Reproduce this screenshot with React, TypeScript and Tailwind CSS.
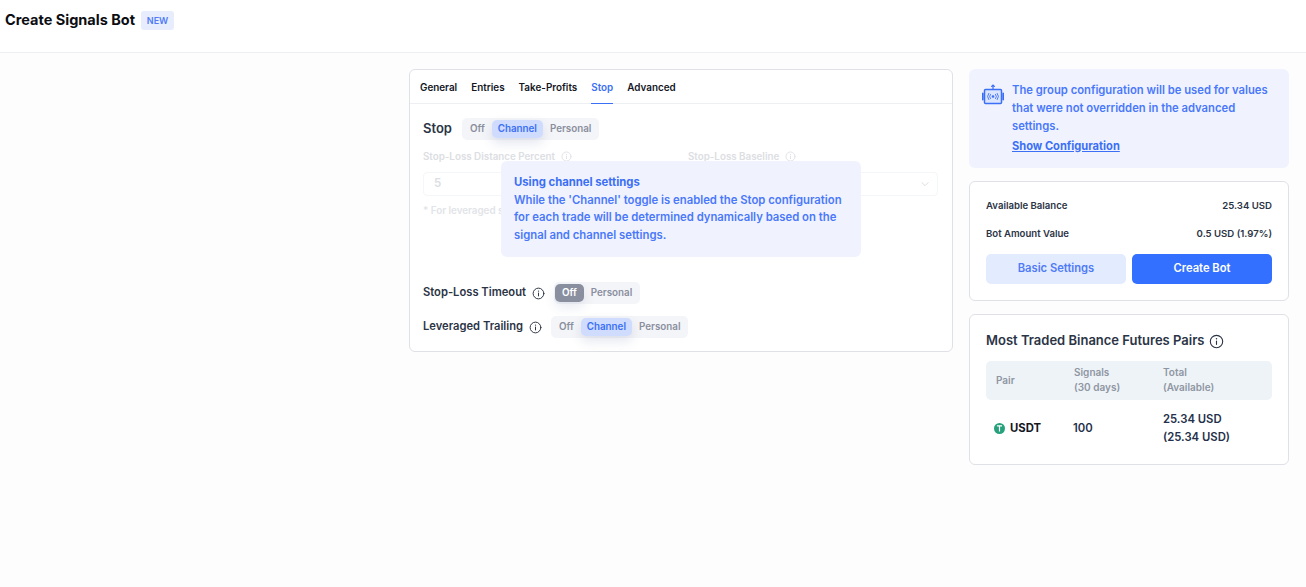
import React from 'react';

const InfoIcon = ({ className }: { className: string }) => (
  <svg viewBox="0 0 16 16" fill="none" stroke="currentColor" strokeWidth="1.2" strokeLinecap="round" className={className}>
    <circle cx="8" cy="8" r="6.6" />
    <path d="M8 7.4v3.6" />
    <path d="M8 5h.01" strokeWidth="1.6" />
  </svg>
);

const BotIcon = () => (
  <svg viewBox="0 0 22 22" fill="none" stroke="#3b6ff5" strokeWidth="1.5" strokeLinecap="round" className="h-[22px] w-[22px]">
    <rect x="2.5" y="5.5" width="17" height="14" rx="1" fill="#dbe5fd" />
    <path d="M11 5V1.5M9.6 2.4 11 1l1.4 1.4" strokeWidth="1.2" />
    <path d="M.8 9.5v6M21.2 9.5v6" strokeWidth="1.8" />
    <circle cx="11" cy="12.5" r="1.3" fill="#3b6ff5" stroke="none" />
    <path d="M8.4 10.4a3.2 3.2 0 0 0 0 4.2M13.6 10.4a3.2 3.2 0 0 1 0 4.2M6.7 9.4a5 5 0 0 0 0 6.2M15.3 9.4a5 5 0 0 1 0 6.2" strokeWidth="0.9" />
  </svg>
);

const UsdtIcon = () => (
  <svg viewBox="0 0 12 12" className="h-[11px] w-[11px] shrink-0">
    <circle cx="6" cy="6" r="6" fill="#26a17b" />
    <path d="M3.2 3.2h5.6M6 3.2V9.2" stroke="#fff" strokeWidth="1.3" fill="none" />
  </svg>
);

const Toggle = ({ items, active, activeTone }: { items: string[]; active: string; activeTone: 'blue' | 'gray' }) => (
  <div className="flex h-[22px] items-center rounded-[5px] bg-[#f4f5f8] px-[1px] py-[2px]">
    {items.map((item) => {
      const on = item === active;
      if (on && activeTone === 'blue') {
        return (
          <span key={item} className="flex h-[18px] items-center rounded-[5px] bg-[#cfdcfd] px-[6px] text-[9.8px] font-semibold text-[#3b6ff5] shadow-[0_5px_12px_rgba(60,80,140,0.14)]">
            {item}
          </span>
        );
      }
      if (on) {
        return (
          <span key={item} className="flex h-[18px] items-center rounded-[5px] bg-[#8a8f9f] px-[7px] text-[9.8px] font-semibold text-white shadow-[0_5px_12px_rgba(60,80,140,0.12)]">
            {item}
          </span>
        );
      }
      return (
        <span key={item} className="flex h-[18px] items-center px-[7px] text-[9.8px] font-semibold text-[#8a8f9f]">
          {item}
        </span>
      );
    })}
  </div>
);

export default function App() {
  const tabs = ['General', 'Entries', 'Take-Profits', 'Stop', 'Advanced'];

  return (
    <div className="min-h-[587px] bg-[#fdfdfe] font-['Inter',sans-serif] text-[#2b3445]">
      <header className="flex h-[53px] items-start gap-[6px] border-b border-[#eeeff2] bg-white pl-[5px] pt-[10px]">
        <h1 className="text-[14.5px] font-bold leading-[20px] text-[#0b0d12]">Create Signals Bot</h1>
        <span className="mt-[1px] flex h-[19px] w-[33px] items-center justify-center rounded-[3px] bg-[#e7edfd] text-[9px] font-semibold text-[#4f7bf7]">NEW</span>
      </header>

      <main className="flex justify-end gap-[16px] pr-[17px] pt-[16px]">
        {/* Settings card */}
        <section className="relative h-[283px] w-[544px] rounded-[6px] border border-[#dfe1e6] bg-white">
          <nav className="flex h-[34px] gap-[14px] border-b border-[#eeeff3] pl-[10px]">
            {tabs.map((tab) =>
              tab === 'Stop' ? (
                <span key={tab} className="flex h-[34px] items-center border-b border-[#3b6ff5] pt-[2px] text-[9.9px] font-semibold text-[#3b6ff5]">{tab}</span>
              ) : (
                <span key={tab} className="flex h-[34px] items-center pt-[1px] text-[9.9px] font-semibold text-[#14171f]">{tab}</span>
              ),
            )}
          </nav>

          <div className="px-[13px] pt-[14px]">
            <div className="flex items-center gap-[10px]">
              <span className="text-[13px] font-semibold text-[#2b3445]">Stop</span>
              <Toggle items={['Off', 'Channel', 'Personal']} active="Channel" activeTone="blue" />
            </div>

            <div className="mt-[9px] flex h-[133px] items-start gap-[15px]">
              <div className="w-[250px]">
                <div className="flex items-center gap-[6px] text-[9.8px] font-semibold leading-[15px] text-[#dcdee3]">
                  Stop-Loss Distance Percent <InfoIcon className="h-[11px] w-[11px]" />
                </div>
                <div className="mt-[8px] flex h-[24px] items-center rounded-[4px] border border-[#f5f6f8] pl-[10px] text-[11.5px] font-semibold text-[#dcdee3]">5</div>
                <div className="mt-[7px] text-[9.8px] font-semibold leading-[15px] text-[#e2e4e8]">* For leveraged s</div>
              </div>
              <div className="w-[250px]">
                <div className="flex items-center gap-[6px] text-[9.8px] font-semibold leading-[15px] text-[#dcdee3]">
                  Stop-Loss Baseline <InfoIcon className="h-[11px] w-[11px]" />
                </div>
                <div className="mt-[8px] flex h-[24px] items-center justify-end rounded-[4px] border border-[#f5f6f8] pr-[7px] text-[#dcdee3]">
                  <svg viewBox="0 0 12 12" fill="none" stroke="currentColor" strokeWidth="1.2" className="h-[10px] w-[10px]"><path d="m2 4 4 4 4-4" /></svg>
                </div>
              </div>
            </div>

            <div className="flex items-center gap-[6px]">
              <span className="pb-[2px] text-[11.2px] font-semibold">Stop-Loss Timeout</span>
              <InfoIcon className="h-[13px] w-[13px]" />
              <span className="ml-[3px]"><Toggle items={['Off', 'Personal']} active="Off" activeTone="gray" /></span>
            </div>
            <div className="mt-[12px] flex items-center gap-[6px]">
              <span className="pb-[2px] text-[11.2px] font-semibold">Leveraged Trailing</span>
              <InfoIcon className="h-[13px] w-[13px]" />
              <span className="ml-[3px]"><Toggle items={['Off', 'Channel', 'Personal']} active="Channel" activeTone="blue" /></span>
            </div>
          </div>

          {/* Overlay over the blurred fields */}
          <div className="absolute left-[91px] top-[91px] h-[96px] w-[360px] rounded-[6px] bg-[#f0f3fe] px-[13px] pt-[13px] text-[11.3px] font-semibold leading-[17.5px] text-[#4a78fb]">
            <div className="font-bold text-[#3b6ff5]">Using channel settings</div>
            <p>While the 'Channel' toggle is enabled the Stop configuration for each trade will be determined dynamically based on the signal and channel settings.</p>
          </div>
        </section>

        {/* Side column */}
        <aside className="flex w-[320px] flex-col gap-[13px]">
          <div className="flex h-[99px] gap-[8px] rounded-[6px] bg-[#f0f3fe] pl-[13px] pr-[12px] pt-[12px]">
            <div className="pt-[3px]"><BotIcon /></div>
            <div className="text-[11.25px] font-semibold leading-[18px] text-[#4a78fb]">
              <p className="w-[262px]">The group configuration will be used for values that were not overridden in the advanced settings.</p>
              <a className="mt-[2px] block text-[11.1px] font-bold leading-[18px] text-[#3b6ff5] underline">Show Configuration</a>
            </div>
          </div>

          <div className="h-[120px] rounded-[6px] border border-[#dfe1e6] bg-white px-[16px] pt-[15px]">
            <div className="flex h-[18px] items-center justify-between text-[9.6px] font-semibold text-[#2b3445]">
              <span>Available Balance</span><span>25.34 USD</span>
            </div>
            <div className="mt-[10px] flex h-[18px] items-center justify-between text-[9.6px] font-semibold text-[#2b3445]">
              <span>Bot Amount Value</span><span>0.5 USD (1.97%)</span>
            </div>
            <div className="mt-[11px] flex gap-[6px]">
              <button className="h-[30px] flex-1 rounded-[5px] bg-[#e3ebfe] pb-[1px] text-[11.2px] font-semibold text-[#4f7bf7]">Basic Settings</button>
              <button className="h-[30px] flex-1 rounded-[5px] bg-[#3370ff] pb-[1px] text-[11.2px] font-semibold text-white">Create Bot</button>
            </div>
          </div>

          <div className="h-[151px] rounded-[6px] border border-[#dfe1e6] bg-white px-[16px] pt-[16px]">
            <div className="flex h-[20px] items-center gap-[5px]">
              <span className="text-[13px] font-semibold text-[#2b3445]">Most Traded Binance Futures Pairs</span>
              <InfoIcon className="h-[15px] w-[15px] text-[#2b3445]" />
            </div>
            <div className="mt-[10px] grid h-[39px] grid-cols-[78px_89px_1fr] items-center rounded-[5px] bg-[#eef3f7] pl-[10px] text-[10px] font-semibold leading-[15px] text-[#8f96a3]">
              <span>Pair</span>
              <span className="pb-[2px]">Signals<br />(30 days)</span>
              <span className="pb-[2px]">Total<br />(Available)</span>
            </div>
            <div className="mt-[10px] grid grid-cols-[79px_90px_1fr] items-center pl-[8px] text-[11.3px] font-semibold leading-[18px] text-[#25304a]">
              <span className="flex items-center gap-[5px] font-bold text-[#14171f]"><UsdtIcon />USDT</span>
              <span>100</span>
              <span>25.34 USD<br />(25.34 USD)</span>
            </div>
          </div>
        </aside>
      </main>
    </div>
  );
}
